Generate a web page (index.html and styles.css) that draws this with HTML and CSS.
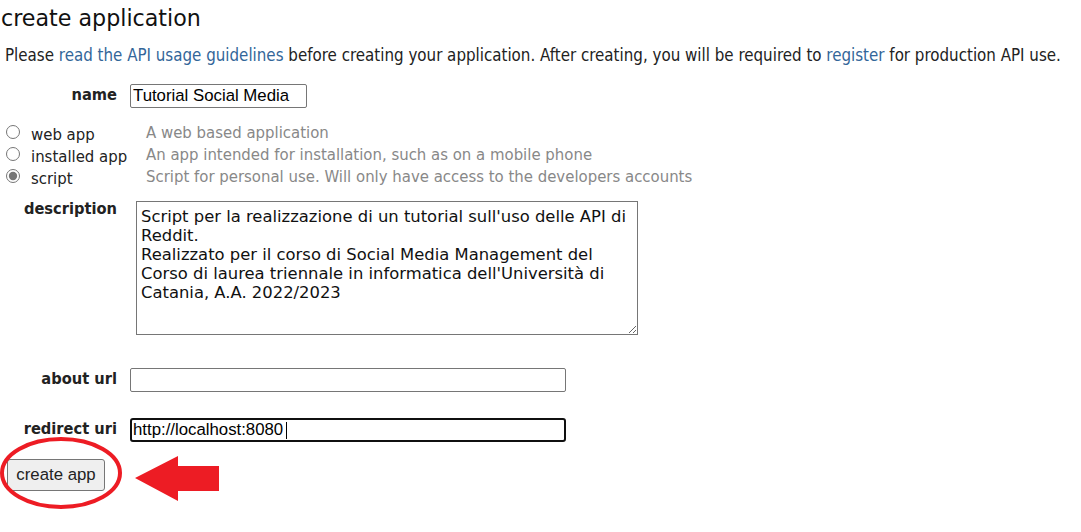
FILE: index.html
```html
<!DOCTYPE html>
<html>
<head>
<meta charset="utf-8">
<title>create application</title>
<link rel="stylesheet" href="styles.css">
</head>
<body>
<h1 class="title">create application</h1>
<p class="intro">Please <a href="#">read the API usage guidelines</a> before creating your application. After creating, you will be required to <a href="#">register</a> for production API use.</p>
<form class="app-form">
  <div class="row row-name">
    <label class="lbl">name</label>
    <input class="field field-name" type="text" value="Tutorial Social Media">
  </div>
  <div class="types">
    <div class="type-opt"><input class="radio" type="radio" name="t"><span class="type-name">web app</span></div>
    <div class="type-desc">A web based application</div>
    <div class="type-opt"><input class="radio" type="radio" name="t"><span class="type-name">installed app</span></div>
    <div class="type-desc">An app intended for installation, such as on a mobile phone</div>
    <div class="type-opt"><input class="radio" type="radio" name="t" checked><span class="type-name">script</span></div>
    <div class="type-desc">Script for personal use. Will only have access to the developers accounts</div>
  </div>
  <div class="row row-desc">
    <label class="lbl">description</label>
    <textarea class="desc-box">Script per la realizzazione di un tutorial sull'uso delle API di
Reddit.
Realizzato per il corso di Social Media Management del
Corso di laurea triennale in informatica dell'Università di
Catania, A.A. 2022/2023</textarea>
  </div>
  <div class="row row-about">
    <label class="lbl">about url</label>
    <input class="field field-wide" type="text" value="">
  </div>
  <div class="row row-redirect">
    <label class="lbl">redirect uri</label>
    <span class="caret-wrap"><input class="field field-wide field-focus" type="text" value="http://localhost:8080"></span>
  </div>
  <div class="submit-row">
    <button class="btn" type="button">create app</button>
    <svg class="annot" width="230" height="80" viewBox="0 0 230 80">
      <ellipse cx="61" cy="39" rx="59" ry="34" fill="none" stroke="#ed1c24" stroke-width="4"/>
      <polygon points="135,44 178,22 178,32 219,32 219,57 178,57 178,67" fill="#ed1c24"/>
    </svg>
  </div>
</form>
</body>
</html>
```
FILE: styles.css
```css
html, body {
  margin: 0;
  padding: 0;
  background: #fff;
}
body {
  font-family: "DejaVu Sans Condensed", "DejaVu Sans", sans-serif;
  font-stretch: condensed;
  color: #222;
  width: 1081px;
  height: 532px;
  overflow: hidden;
}
.title {
  margin: 0;
  padding: 5px 0 0 1px;
  font-family: "DejaVu Sans", sans-serif;
  font-stretch: normal;
  font-weight: normal;
  font-size: 22.2px;
  line-height: 26px;
  color: #111;
}
.intro {
  margin: 14px 0 0 5px;
  font-size: 16.8px;
  line-height: 20px;
  white-space: nowrap;
}
.intro a {
  color: #369;
  text-decoration: none;
}
.app-form {
  margin: 0;
}
.row {
  display: grid;
  grid-template-columns: 117px auto;
  column-gap: 13px;
  align-items: start;
}
.lbl {
  text-align: right;
  font-weight: bold;
  font-size: 16.3px;
  line-height: 19px;
  padding-top: 1px;
}
.field {
  box-sizing: border-box;
  height: 24px;
  margin: 0;
  padding: 1px 2px;
  font-family: "Liberation Sans", Arial, sans-serif;
  font-size: 16.8px;
  color: #000;
  border: 1px solid #767676;
  border-radius: 2px;
  background: #fff;
  outline: none;
}
.row-name {
  margin-top: 19px;
}
.field-name {
  width: 177px;
}
.field-wide {
  width: 436px;
}
.field-focus {
  border: 2px solid #101010;
  border-radius: 3px;
  padding: 0 1px;
}
.caret-wrap {
  position: relative;
  display: inline-block;
  width: 436px;
  height: 24px;
}
.caret-wrap::after {
  content: "";
  position: absolute;
  left: 156px;
  top: 4px;
  width: 1px;
  height: 17px;
  background: #000;
}
.types {
  margin-top: 17px;
  padding-left: 6px;
  display: grid;
  grid-template-columns: 140px auto;
  grid-auto-rows: 22px;
  font-size: 16.6px;
}
.type-opt {
  display: flex;
  align-items: flex-start;
}
.radio {
  width: 14px;
  height: 14px;
  margin: 0;
  flex: none;
  accent-color: #767676;
}
.type-name {
  margin-left: 11px;
  line-height: 18px;
  padding-top: 1px;
}
.type-desc {
  color: #888;
  line-height: 18px;
  margin-top: -1px;
}
.row-desc {
  margin-top: 10px;
}
.row-desc .lbl {
  margin-top: -3px;
}
.desc-box {
  box-sizing: border-box;
  width: 502px;
  height: 134px;
  margin: 0 0 0 6px;
  padding: 5px 4px 3px;
  font-family: "DejaVu Sans", sans-serif;
  font-stretch: normal;
  font-size: 16.4px;
  line-height: 19px;
  color: #111;
  border: 1px solid #767676;
  border-radius: 0;
  resize: both;
  white-space: pre;
  overflow: hidden;
}
.row-about {
  margin-top: 33px;
}
.row-redirect {
  margin-top: 26px;
}
.submit-row {
  position: relative;
  margin-top: 17px;
  padding-left: 7px;
}
.btn {
  box-sizing: border-box;
  width: 98px;
  height: 32px;
  margin: 0;
  padding: 0;
  font-family: "Liberation Sans", Arial, sans-serif;
  font-size: 16.8px;
  color: #222;
  background: #efefef;
  border: 1px solid #767676;
  border-radius: 3px;
}
.annot {
  position: absolute;
  left: 0;
  top: -25px;
  pointer-events: none;
}
```
